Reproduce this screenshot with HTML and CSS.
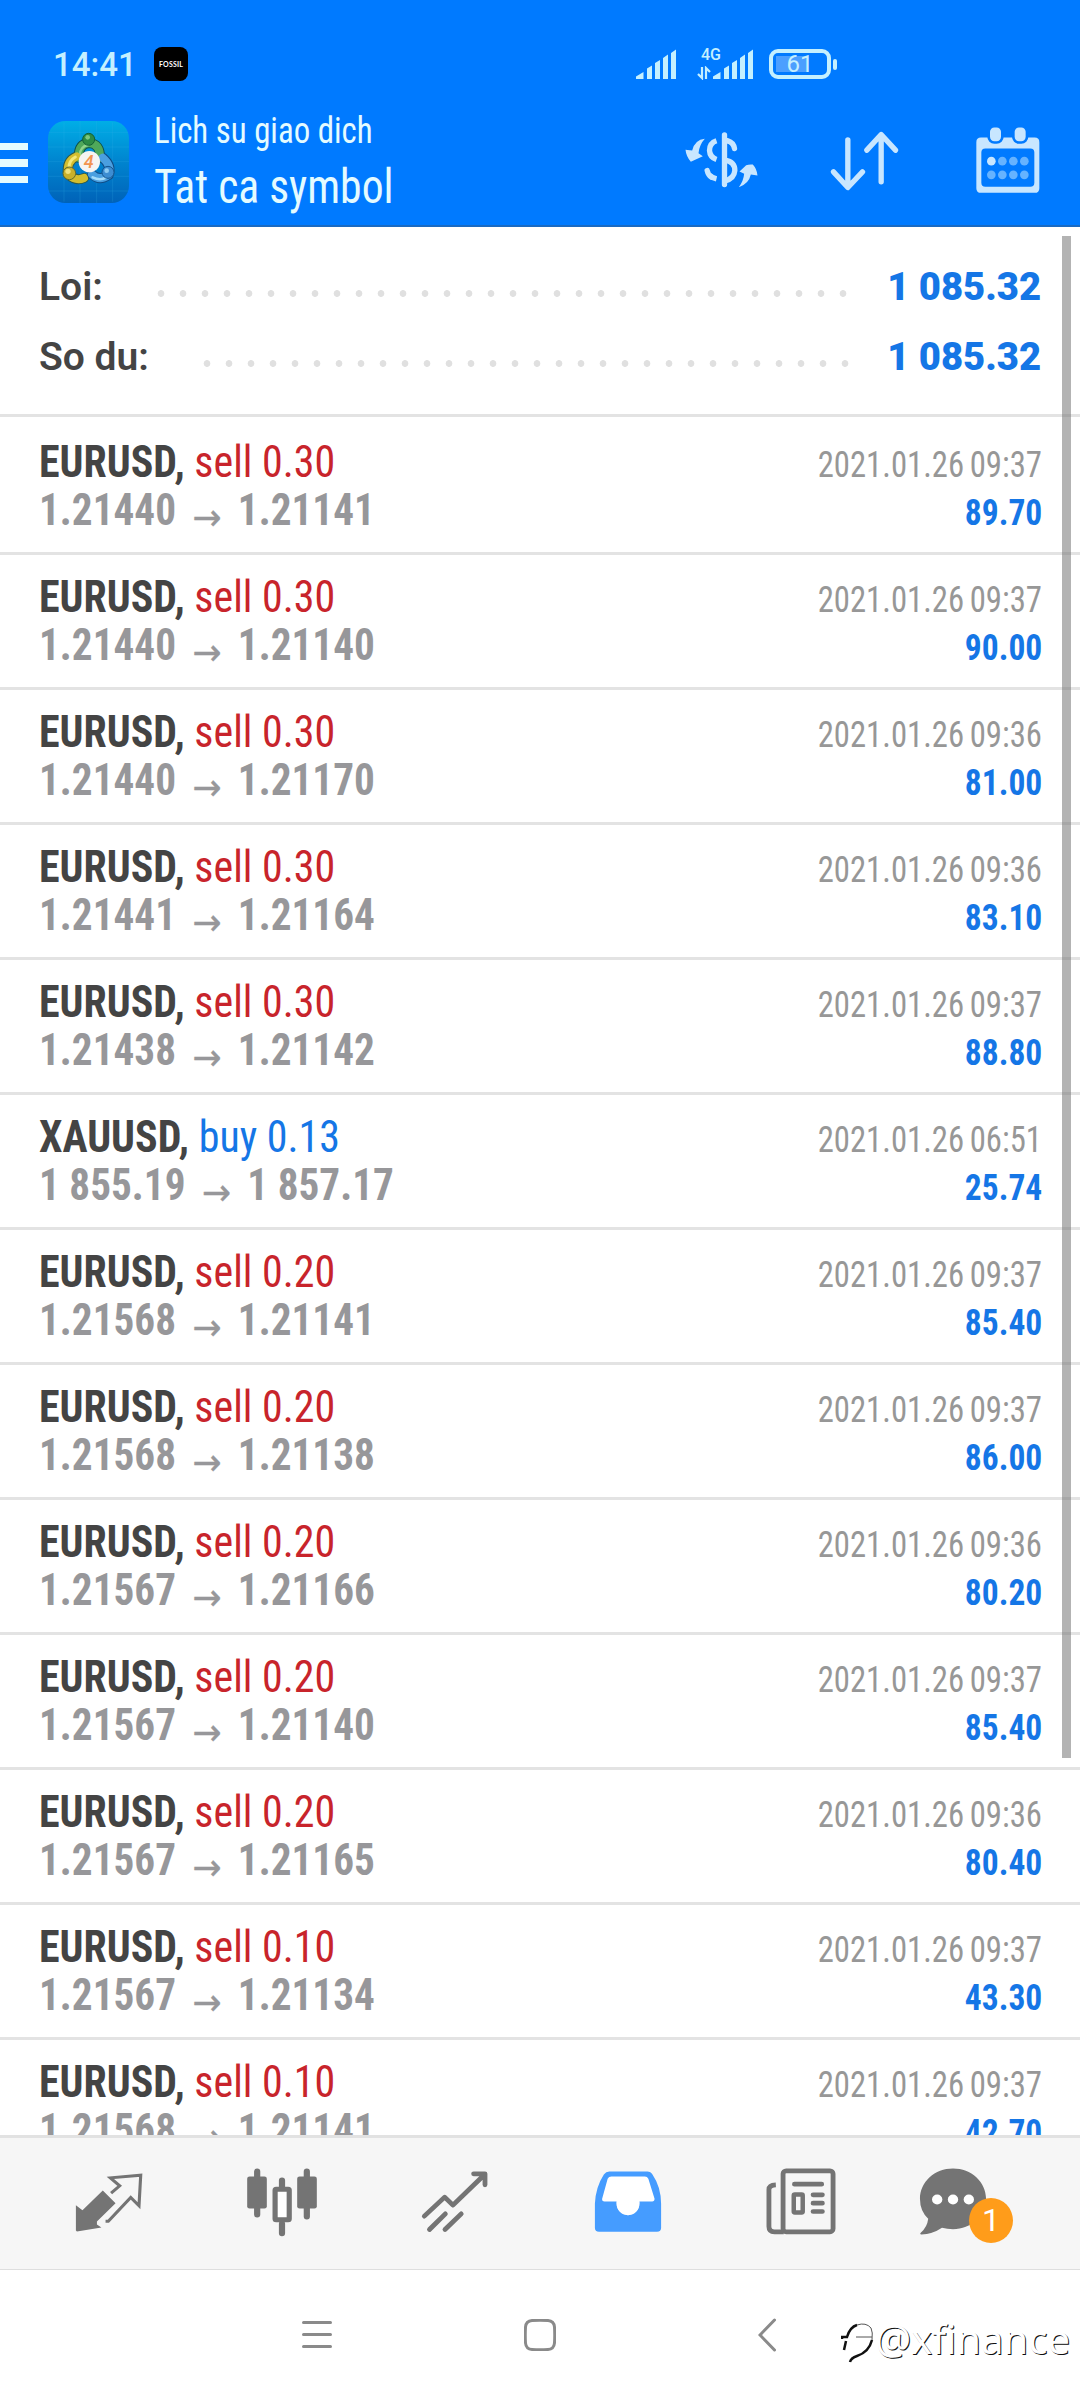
FILE: index.html
```html
<!DOCTYPE html>
<html lang="vi">
<head>
<meta charset="utf-8">
<title>Lich su giao dich</title>
<link rel="stylesheet" href="styles.css">
</head>
<body>
<div class="screen">
  <header class="header">
    <div class="status">
      <span class="clock">14:41</span>
      <span class="notif">FOSSIL</span>
      <svg class="signal" viewBox="635 48 41 30"><path d="M635 78V75.500L642.500 71V78ZM646 78V67.500L651 64.500V78ZM654 78V62L659 59V78ZM662 78V57L667 53.500V78ZM670 78V52L675 48.500V78Z"/></svg>
      <span class="network">
        <span class="gen">4G</span>
        <svg class="updown" viewBox="696 65 14 14"><path d="M701 66V77L697 73M705 78V67L709 71"/></svg>
      </span>
      <svg class="signal" viewBox="635 48 41 30"><path d="M635 78V75.500L642.500 71V78ZM646 78V67.500L651 64.500V78ZM654 78V62L659 59V78ZM662 78V57L667 53.500V78ZM670 78V52L675 48.500V78Z"/></svg>
      <span class="battery"><span class="cell">61</span><span class="nub"></span></span>
    </div>
    <div class="appbar">
      <div class="burger"><i></i><i></i><i></i></div>
      <svg class="logo" viewBox="52 30 243 246">
        <defs>
          <linearGradient id="sky" x1="0" y1="0" x2="0" y2="1"><stop offset="0" stop-color="#00aee6"/><stop offset=".5" stop-color="#0084cf"/><stop offset="1" stop-color="#0062b8"/></linearGradient>
        </defs>
        <rect x="52" y="30" width="243" height="246" rx="52" fill="url(#sky)"/>
        <path d="M100 34V272M148 30V276M198 30V276M246 34V272M54 64H293M52 108H295M52 152H295M52 196H295M54 240H293" stroke="#37b4ea" stroke-opacity=".3" stroke-width="2" fill="none"/>
        <g fill="none" stroke-linecap="round">
          <path d="M144 140Q143 98 175 96Q209 98 208 140" stroke="#0d4f4a" stroke-width="30"/>
          <path d="M138 136Q106 150 112 190Q136 212 160 201" stroke="#2f5a4a" stroke-width="30"/>
          <path d="M216 140Q244 164 234 192Q206 212 184 190" stroke="#0f4c86" stroke-width="30"/>
          <path d="M144 140Q143 98 175 96Q209 98 208 140" stroke="#4fa85a" stroke-width="24"/>
          <path d="M147 134Q148 106 172 102" stroke="#8fd48a" stroke-width="7"/>
          <path d="M138 136Q106 150 112 190Q136 212 160 201" stroke="#d3bd2e" stroke-width="24"/>
          <path d="M134 138Q112 150 116 172" stroke="#f3e878" stroke-width="9"/>
          <path d="M216 140Q244 164 234 192Q206 212 184 190" stroke="#4a9fe0" stroke-width="24"/>
          <path d="M186 199Q208 210 226 200" stroke="#a4dcfa" stroke-width="8"/>
        </g>
        <circle cx="174" cy="85" r="18" fill="#2c8b45" stroke="#126036" stroke-width="3"/>
        <circle cx="116" cy="187" r="19" fill="#c9b02a" stroke="#5d6a30" stroke-width="3"/>
        <circle cx="232" cy="184" r="18" fill="#3d8dd2" stroke="#15568f" stroke-width="3"/>
        <circle cx="171" cy="79" r="7" fill="#7cc77e"/><circle cx="112" cy="181" r="8" fill="#efe07a"/><circle cx="228" cy="179" r="7" fill="#8ecbf2"/>
        <circle cx="176" cy="152" r="32" fill="#f6f4f2"/>
        <text x="174" y="171" text-anchor="middle" class="logo-num">4</text>
      </svg>
      <div class="titles">
        <div class="title-small">Lich su giao dich</div>
        <div class="title-big">Tat ca symbol</div>
      </div>
      <div class="actions">
        <svg viewBox="151.500 304.500 429 240">
          <g transform="translate(240 300)">
            <path class="ic-fill" d="M76 55Q46 58 38 90L18 88Q20 108 34 124L70 107L57 98Q60 72 76 55ZM178 200Q192 182 194 160L180 153L200 134Q208 131 220 132Q232 145 234 165L214 162Q208 190 178 200Z"/>
            <path class="ic-line" d="M135 43V192M145 61Q162 66 165 84M83 150Q86 164 96 170"/>
            <path class="ic-line butt" d="M111 61Q90 68 90 90Q91 110 111 117M90 164Q98 172 111 175M137 119Q166 124 166 150Q164 174 137 181"/>
          </g>
        </svg>
        <svg viewBox="580.500 304.500 429 240"><path class="ic-line" d="M745 358V500M702 454L745 501L789 454M845 484V344M802 389L845 342L888 389"/></svg>
        <svg viewBox="1010 304.500 429 240">
          <path class="ic-fill" fill-rule="evenodd" d="M1145 351H1306Q1320 351 1320 365V503Q1320 517 1306 517H1145Q1131 517 1131 503V365Q1131 351 1145 351ZM1158 384Q1146 384 1146 396V487Q1146 499 1158 499H1293Q1305 499 1305 487V396Q1305 384 1293 384Z"/>
          <rect class="ring" x="1168" y="317" width="41" height="49" rx="17"/><rect class="ring" x="1242" y="317" width="41" height="49" rx="17"/>
          <circle class="ic-fill" cx="1176" cy="422" r="13"/>
          <g fill="#66b3ff"><circle cx="1209" cy="422" r="13"/><circle cx="1242" cy="422" r="13"/><circle cx="1275" cy="422" r="13"/><circle cx="1176" cy="463" r="13"/><circle cx="1209" cy="463" r="13"/><circle cx="1242" cy="463" r="13"/><circle cx="1275" cy="463" r="13"/></g>
        </svg>
      </div>
    </div>
  </header>

  <main class="content">
    <section class="summary">
      <div class="sum-row"><span>Loi:</span><i class="dots"></i><b>1 085.32</b></div>
      <div class="sum-row"><span>So du:</span><i class="dots"></i><b>1 085.32</b></div>
    </section>
    <section class="deals">
      <article class="deal"><div class="line"><span class="name"><b>EURUSD,</b> <span class="sell">sell 0.30</span></span><time>2021.01.26 09:37</time></div><div class="line"><span class="price">1.21440<i>→</i>1.21141</span><span class="profit">89.70</span></div></article>
      <article class="deal"><div class="line"><span class="name"><b>EURUSD,</b> <span class="sell">sell 0.30</span></span><time>2021.01.26 09:37</time></div><div class="line"><span class="price">1.21440<i>→</i>1.21140</span><span class="profit">90.00</span></div></article>
      <article class="deal"><div class="line"><span class="name"><b>EURUSD,</b> <span class="sell">sell 0.30</span></span><time>2021.01.26 09:36</time></div><div class="line"><span class="price">1.21440<i>→</i>1.21170</span><span class="profit">81.00</span></div></article>
      <article class="deal"><div class="line"><span class="name"><b>EURUSD,</b> <span class="sell">sell 0.30</span></span><time>2021.01.26 09:36</time></div><div class="line"><span class="price">1.21441<i>→</i>1.21164</span><span class="profit">83.10</span></div></article>
      <article class="deal"><div class="line"><span class="name"><b>EURUSD,</b> <span class="sell">sell 0.30</span></span><time>2021.01.26 09:37</time></div><div class="line"><span class="price">1.21438<i>→</i>1.21142</span><span class="profit">88.80</span></div></article>
      <article class="deal"><div class="line"><span class="name"><b>XAUUSD,</b> <span class="buy">buy 0.13</span></span><time>2021.01.26 06:51</time></div><div class="line"><span class="price">1 855.19<i>→</i>1 857.17</span><span class="profit">25.74</span></div></article>
      <article class="deal"><div class="line"><span class="name"><b>EURUSD,</b> <span class="sell">sell 0.20</span></span><time>2021.01.26 09:37</time></div><div class="line"><span class="price">1.21568<i>→</i>1.21141</span><span class="profit">85.40</span></div></article>
      <article class="deal"><div class="line"><span class="name"><b>EURUSD,</b> <span class="sell">sell 0.20</span></span><time>2021.01.26 09:37</time></div><div class="line"><span class="price">1.21568<i>→</i>1.21138</span><span class="profit">86.00</span></div></article>
      <article class="deal"><div class="line"><span class="name"><b>EURUSD,</b> <span class="sell">sell 0.20</span></span><time>2021.01.26 09:36</time></div><div class="line"><span class="price">1.21567<i>→</i>1.21166</span><span class="profit">80.20</span></div></article>
      <article class="deal"><div class="line"><span class="name"><b>EURUSD,</b> <span class="sell">sell 0.20</span></span><time>2021.01.26 09:37</time></div><div class="line"><span class="price">1.21567<i>→</i>1.21140</span><span class="profit">85.40</span></div></article>
      <article class="deal"><div class="line"><span class="name"><b>EURUSD,</b> <span class="sell">sell 0.20</span></span><time>2021.01.26 09:36</time></div><div class="line"><span class="price">1.21567<i>→</i>1.21165</span><span class="profit">80.40</span></div></article>
      <article class="deal"><div class="line"><span class="name"><b>EURUSD,</b> <span class="sell">sell 0.10</span></span><time>2021.01.26 09:37</time></div><div class="line"><span class="price">1.21567<i>→</i>1.21134</span><span class="profit">43.30</span></div></article>
      <article class="deal"><div class="line"><span class="name"><b>EURUSD,</b> <span class="sell">sell 0.10</span></span><time>2021.01.26 09:37</time></div><div class="line"><span class="price">1.21568<i>→</i>1.21141</span><span class="profit">42.70</span></div></article>
    </section>
    <div class="scrollbar"></div>
  </main>

  <nav class="tabs">
    <div class="tab"><svg viewBox="199 370.500 232 240" preserveAspectRatio="none"><path fill="#747474" d="M297 450L334 488L280 543V552L293 561L222 573L219 570V494L238 509Z"/><path class="t-line thin" d="M321 458L346 436L319 412L407 404L402 496L378 471L313 542H305"/></svg></div>
    <div class="tab"><svg viewBox="700 370.500 232 240" preserveAspectRatio="none"><path class="t-line bar" d="M744 393V522M888 393V528M816 420V440M816 550V578"/><rect x="715" y="408" width="57" height="96" rx="7" fill="#747474"/><rect x="860" y="408" width="57" height="96" rx="7" fill="#747474"/><rect x="796" y="446" width="41" height="92" rx="3" fill="#fff" stroke="#747474" stroke-width="15"/></svg></div>
    <div class="tab"><svg viewBox="1203 370.500 232 240" preserveAspectRatio="none"><path class="t-line" d="M1230 527L1289 470L1313 494L1405 402M1373 400H1406V433M1245 567L1291 520M1290 567L1337 520"/></svg></div>
    <div class="tab"><svg viewBox="138 370.500 232 240" preserveAspectRatio="none"><path d="M192 403H318L340 490H168Z" fill="#fff"/><path fill="#459cff" fill-rule="evenodd" d="M158 490Q160 440 184 402Q190 393 200 393H310Q320 393 325 402Q350 440 350 490V562Q350 574 338 574H170Q158 574 158 562ZM206 408H303Q310 408 313 415L331 475Q331 483 324 483H287V490A33 34 0 0 1 221 490V483H186Q178 483 179 475L195 415Q198 408 206 408Z"/><path d="M221 483H287V490A33 34 0 0 1 221 490Z" fill="#fff"/></svg></div>
    <div class="tab"><svg viewBox="642 370.500 232 240" preserveAspectRatio="none"><rect class="t-line" x="706" y="391" width="145" height="183" rx="9"/><path class="t-line butt" d="M685 433Q665 434 665 447V558Q665 574 681 574H708"/><path class="t-line" d="M739 431H818M793 463H820M793 488H820M793 513H820"/><rect class="t-line small" x="737" y="462" width="26" height="54" rx="3"/></svg></div>
    <div class="tab chat"><svg class="wide" viewBox="1091.500 370.500 337 240" preserveAspectRatio="none"><path fill="#747474" d="M1199 384C1252 384 1295 424 1295 475C1295 526 1252 566 1199 566Q1182 566 1167 562Q1140 581 1107 582Q1101 581 1106 576Q1124 560 1127 535Q1103 512 1103 475C1103 424 1146 384 1199 384Z"/><circle cx="1153" cy="477" r="15" fill="#fff"/><circle cx="1199" cy="477" r="15" fill="#fff"/><circle cx="1245" cy="477" r="15" fill="#fff"/></svg><span class="badge">1</span></div>
  </nav>

  <footer class="sysnav">
    <svg class="s-menu" viewBox="0 0 30 32"><path d="M1.500 3.500H28.500M1.500 15.500H28.500M1.500 27.500H28.500"/></svg>
    <svg class="s-home" viewBox="0 0 32 32"><path d="M8 1.500Q16 1 24 1.500Q30 2 30.500 8Q31 16 30.500 24Q30 30 24 30.500Q16 31 8 30.500Q2 30 1.500 24Q1 16 1.500 8Q2 2 8 1.500Z"/></svg>
    <svg class="s-back" viewBox="0 0 18 34"><path d="M16.500 2L2 17L16.500 32"/></svg>
    <div class="mark">
      <svg viewBox="0 0 34 42"><path class="m-dark" d="M1 17V15H6Q9 5 16 3M31 18Q28 30 16 34Q10 36 9 40M5 19L3 28"/><path class="m-thin" d="M16 3Q25 0 30 6Q32 10 31 18M15 15H31"/></svg><span>@xfinance</span>
    </div>
  </footer>
</div>
</body>
</html>
```
FILE: styles.css
```css
* { box-sizing: border-box; }
body { margin: 0; background: #fff; font-family: "Roboto Condensed", Roboto, sans-serif; }
.screen { width: 1080px; height: 2400px; display: flex; flex-direction: column; overflow: hidden; background: #fff; }
svg { display: block; flex: none; }
i { font-style: normal; }

.header { flex: none; height: 227px; background: #007aff; border-bottom: 2px solid #1a6ac2; color: #e4fbff; }
.status { display: flex; align-items: center; height: 98px; padding: 30px 243px 0 53px; font-family: Roboto, sans-serif; color: #c4f0ff; }
.clock { width: 101px; font-size: 33px; font-weight: 500; line-height: 36px; padding-top: 1px; }
.notif { width: 34px; height: 34px; border-radius: 8px; background: #000; color: #fff; font: 700 7px/34px Lato, sans-serif; text-align: center; letter-spacing: .2px; margin-right: auto; }
.signal { width: 41px; height: 30px; fill: #c4f0ff; }
.network { width: 16px; height: 32px; margin-left: 20px; display: flex; flex-direction: column; justify-content: space-between; }
.gen { font-size: 16px; font-weight: 500; line-height: 14px; margin-left: 4px; }
.updown { width: 14px; height: 14px; fill: none; stroke: #c4f0ff; stroke-width: 2.200; }
.battery { display: flex; align-items: center; gap: 2px; margin-left: 15px; }
.cell { width: 62px; height: 30px; border: 4px solid #c4f0ff; border-radius: 9px; background: linear-gradient(#4b9fff, #4b9fff) 3px 3px / 31px 16px no-repeat; font-size: 24px; line-height: 23px; text-align: center; }
.nub { width: 4px; height: 11px; border-radius: 2px; background: #c4f0ff; }

.appbar { display: flex; align-items: center; height: 127px; }
.burger { width: 28px; display: flex; flex-direction: column; gap: 9px; padding-top: 3px; }
.burger i { height: 7.500px; background: #e4fbff; }
.logo { width: 81px; height: 82px; margin-left: 20px; }
.logo-num { font: italic 500 54px Roboto, sans-serif; fill: #f29450; }
.titles { flex: 1; margin-left: 25px; padding-top: 2px; white-space: nowrap; }
.title-small { font-size: 37px; font-weight: 430; line-height: 48px; transform: scaleX(.888); transform-origin: left; }
.title-big { font-size: 48px; font-weight: 430; line-height: 64px; transform: scaleX(.909); transform-origin: left; }
.actions { display: flex; margin-right: 1px; }
.actions svg { width: 143px; height: 80px; }
.ic-fill { fill: #c8e6ff; }
.ic-line { fill: none; stroke: #c8e6ff; stroke-width: 16; stroke-linecap: round; stroke-linejoin: round; }
.butt { stroke-linecap: butt; }
.ring { fill: #c8e6ff; stroke: #007aff; stroke-width: 8; }

.content { position: relative; height: 1908px; flex: none; overflow: hidden; }
.summary { height: 190px; padding: 25px 39px 0; border-bottom: 3px solid #e3e3e3; font: 600 39px/70px Roboto, sans-serif; color: #444; }
.sum-row { display: flex; height: 70px; }
.dots { flex: 1; margin: 38px 28px 0 47px; height: 7px; background: radial-gradient(circle at center, #e0e0e0 3px, transparent 3.700px) left / 22px 7px repeat-x; }
.sum-row b { color: #1576e6; transform: scaleX(.98); transform-origin: right; }
.deals { padding-top: 3px; }
.deal { height: 135px; padding: 18px 38px 0 39px; border-bottom: 3px solid #e3e3e3; }
.line { display: flex; justify-content: space-between; align-items: baseline; height: 48px; line-height: 48px; white-space: nowrap; }
.name, .price { font-size: 44px; transform-origin: left; color: #444; }
.name { transform: scaleX(.953); }
.price { transform: scaleX(.937); color: #97979a; font-weight: 700; }
.price i { display: inline-block; width: 66px; text-align: center; vertical-align: -5px; font: 400 37px/30px "DejaVu Sans", sans-serif; -webkit-text-stroke: .4px; }
.sell { color: #c8242b; }
.buy { color: #1576e6; }
time { font-size: 36px; color: #979797; word-spacing: -2px; transform: scaleX(.908); transform-origin: right; }
.profit { font-size: 36px; font-weight: 700; color: #1576e6; transform: scaleX(.93); transform-origin: right; }
.scrollbar { position: absolute; right: 9px; top: 9px; width: 9px; height: 1522px; background: rgba(110, 110, 110, .52); }

.tabs { flex: none; height: 135px; display: flex; align-items: center; padding-left: 22px; background: #f6f6f6; border-top: 3px solid #e2e2e2; border-bottom: 1px solid #dedede; }
.tab { width: 173px; display: flex; justify-content: center; }
.tab svg { width: 80px; height: 80px; }
.tab svg.wide { width: 116px; }
.t-line { fill: none; stroke: #747474; stroke-width: 14; stroke-linecap: round; stroke-linejoin: round; }
.t-line.butt { stroke-linecap: butt; }
.t-line.thin { stroke-width: 9; stroke-linecap: butt; stroke-linejoin: miter; }
.t-line.bar { stroke-width: 18; }
.t-line.small { stroke-width: 13; }
.chat { position: relative; }
.badge { position: absolute; left: 82px; top: 34px; width: 44px; height: 45px; border-radius: 50%; background: #ff9c1a; color: #fff; font: 400 32px/45px Roboto, sans-serif; text-align: center; }

.sysnav { position: relative; flex: 1; display: flex; align-items: center; padding-left: 302px; background: #fff; }
.sysnav > svg { fill: none; stroke: #8a8a8a; stroke-width: 3; stroke-linecap: round; }
.s-menu { width: 30px; height: 32px; }
.s-home { width: 32px; height: 32px; margin-left: 192px; }
.s-back { width: 18px; height: 34px; margin-left: 202px; }
.mark { position: absolute; right: 10px; top: 41px; display: flex; align-items: center; color: #fff; font: 400 40px/56px "Noto Sans", sans-serif; text-shadow: 1px 1px .5px #111; }
.mark svg { width: 34px; height: 42px; fill: none; margin-top: 8px; }
.m-dark { stroke: #111; stroke-width: 2.500; }
.m-thin { stroke: #555; stroke-width: 1; }
```
